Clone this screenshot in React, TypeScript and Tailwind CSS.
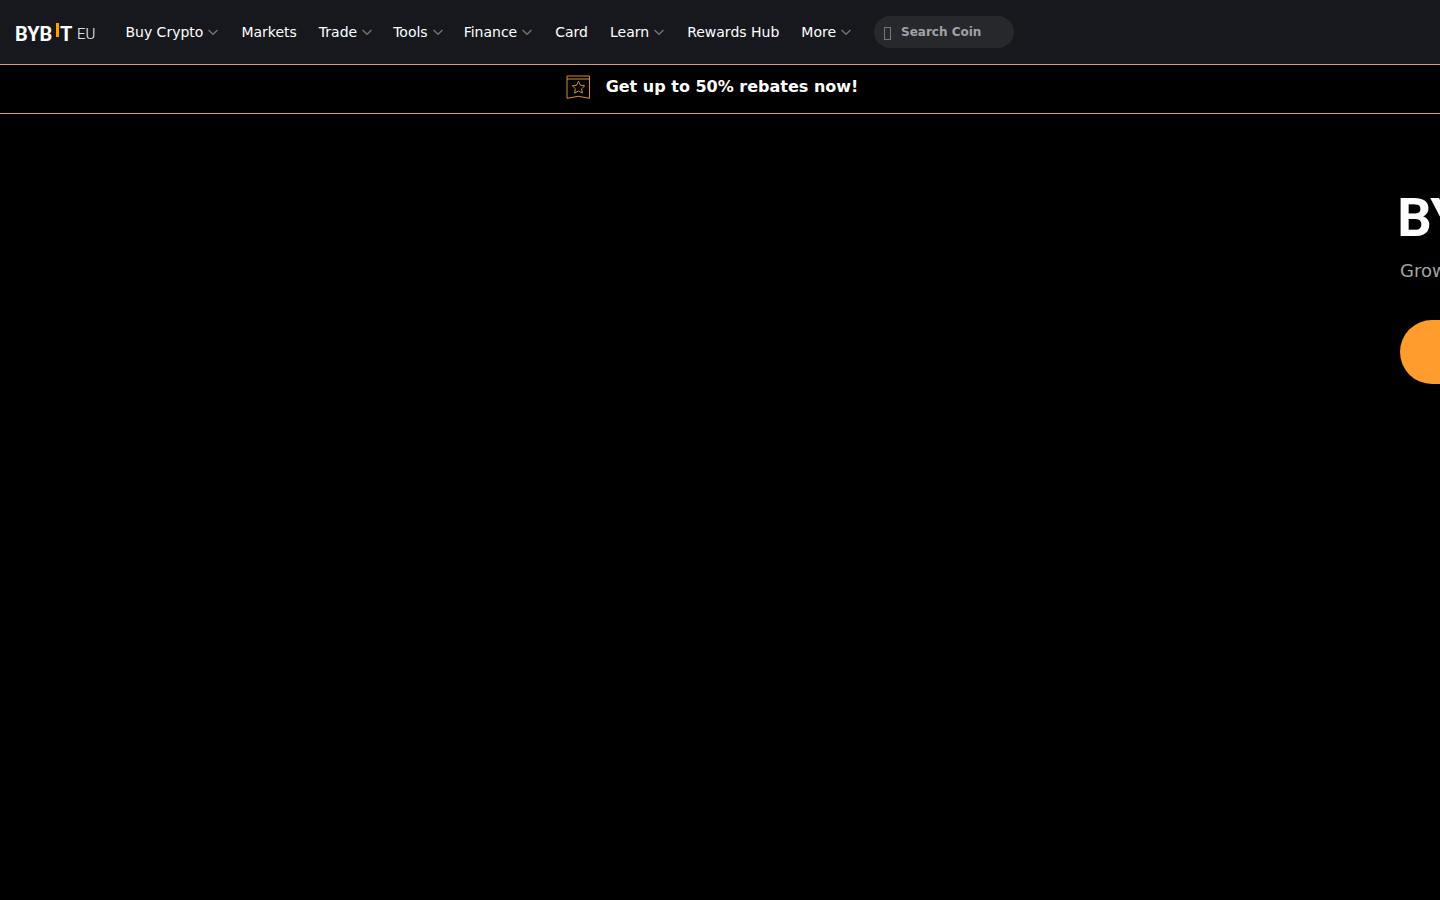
import React from "react";

interface NavItem {
  label: string;
  hasMenu: boolean;
  className?: string;
}

const navItems: NavItem[] = [
  { label: "Buy Crypto", hasMenu: true },
  { label: "Markets", hasMenu: false },
  { label: "Trade", hasMenu: true, className: "-mr-0.5" },
  { label: "Tools", hasMenu: true, className: "-mr-0.5" },
  { label: "Finance", hasMenu: true },
  { label: "Card", hasMenu: false },
  { label: "Learn", hasMenu: true },
  { label: "Rewards Hub", hasMenu: false },
  { label: "More", hasMenu: true },
];

const ChevronIcon = () => (
  <svg width="12" height="12" viewBox="0 0 12 12" fill="none" aria-hidden="true">
    <path d="M1.5 4L6 8.3L10.5 4" stroke="#71757a" strokeWidth="1.3" />
  </svg>
);

const TicketIcon = () => (
  <svg width="24" height="24" viewBox="0 0 24 24" fill="none" aria-hidden="true">
    <g stroke="#d98e32" strokeWidth="1">
      <path d="M1 1H23.5V23.3L12.5 21.3L1 23.3Z" />
      <path d="M1 4H23.5" />
      <path d="M12.5 6.2L14.4 10.2L18.7 10.8L15.6 13.8L16.4 18.1L12.5 16L8.6 18.1L9.4 13.8L6.3 10.8L10.6 10.2Z" />
    </g>
  </svg>
);

// the "I" of the wordmark is the raised yellow bar
const Wordmark = ({ className }: { className: string }) => (
  <svg
    viewBox="0 0 57 20"
    className={`shrink-0 overflow-visible ${className}`}
    role="img"
    aria-label="Bybit"
  >
    <g
      fill="#ffffff"
      fontSize="20"
      className="font-[Roboto,sans-serif] font-bold"
    >
      <text x="-1" y="19">
        BYB
      </text>
      <text x="44" y="19">
        T
      </text>
    </g>
    <rect x="40" y="1" width="3" height="14" fill="#f7a600" />
  </svg>
);

const Header = () => (
  <header className="flex h-16 items-center bg-[#17181e] px-4 text-sm text-white">
    <a href="#" className="flex items-center">
      <Wordmark className="h-5 w-[57px]" />
      <span className="mt-1 ml-1 font-[Roboto,sans-serif] text-[15px] leading-5 font-light">
        EU
      </span>
    </a>
    <nav className="ml-[30px] flex items-center gap-[22px]">
      {navItems.map((item) =>
        item.hasMenu ? (
          <button
            key={item.label}
            className={`flex items-center gap-1 whitespace-nowrap ${item.className ?? ""}`}
          >
            {item.label}
            <ChevronIcon />
          </button>
        ) : (
          <a key={item.label} href="#" className="whitespace-nowrap">
            {item.label}
          </a>
        )
      )}
    </nav>
    <label className="ml-[22px] flex h-8 w-[140px] items-center gap-2.5 rounded-full bg-[#26282c] px-2.5">
      <span className="mt-0.5 h-[13px] w-[7px] shrink-0 border border-[#75777c]" />
      <input
        type="text"
        aria-label="Search Coin"
        placeholder="Search Coin"
        className="w-full min-w-0 text-xs font-bold text-white outline-none placeholder:text-[#a0a2a8]"
      />
    </label>
  </header>
);

const RebateBanner = () => (
  <a
    href="#"
    className="flex h-[50px] items-center justify-center gap-4 border-y border-[#d9a05c] pr-4 pb-1 text-base font-bold text-white"
  >
    <TicketIcon />
    <span>Get up to 50% rebates now!</span>
  </a>
);

const Hero = () => (
  <section className="flex pt-[71px]">
    <div className="flex-1" />
    <div className="w-10 whitespace-nowrap">
      <Wordmark className="h-[54px] w-[154px]" />
      <p className="mt-4 text-lg leading-8 text-[#a3a3a3]">
        Grow Your Edge
      </p>
      <button
        aria-label="Get started"
        className="mt-[33px] h-16 w-80 rounded-full bg-[#ff9c2e]"
      />
    </div>
  </section>
);

const App = () => {
  return (
    <div className="min-h-screen overflow-hidden bg-black font-['DejaVu_Sans',sans-serif]">
      <Header />
      <RebateBanner />
      <main>
        <Hero />
      </main>
    </div>
  );
};

export default App;
